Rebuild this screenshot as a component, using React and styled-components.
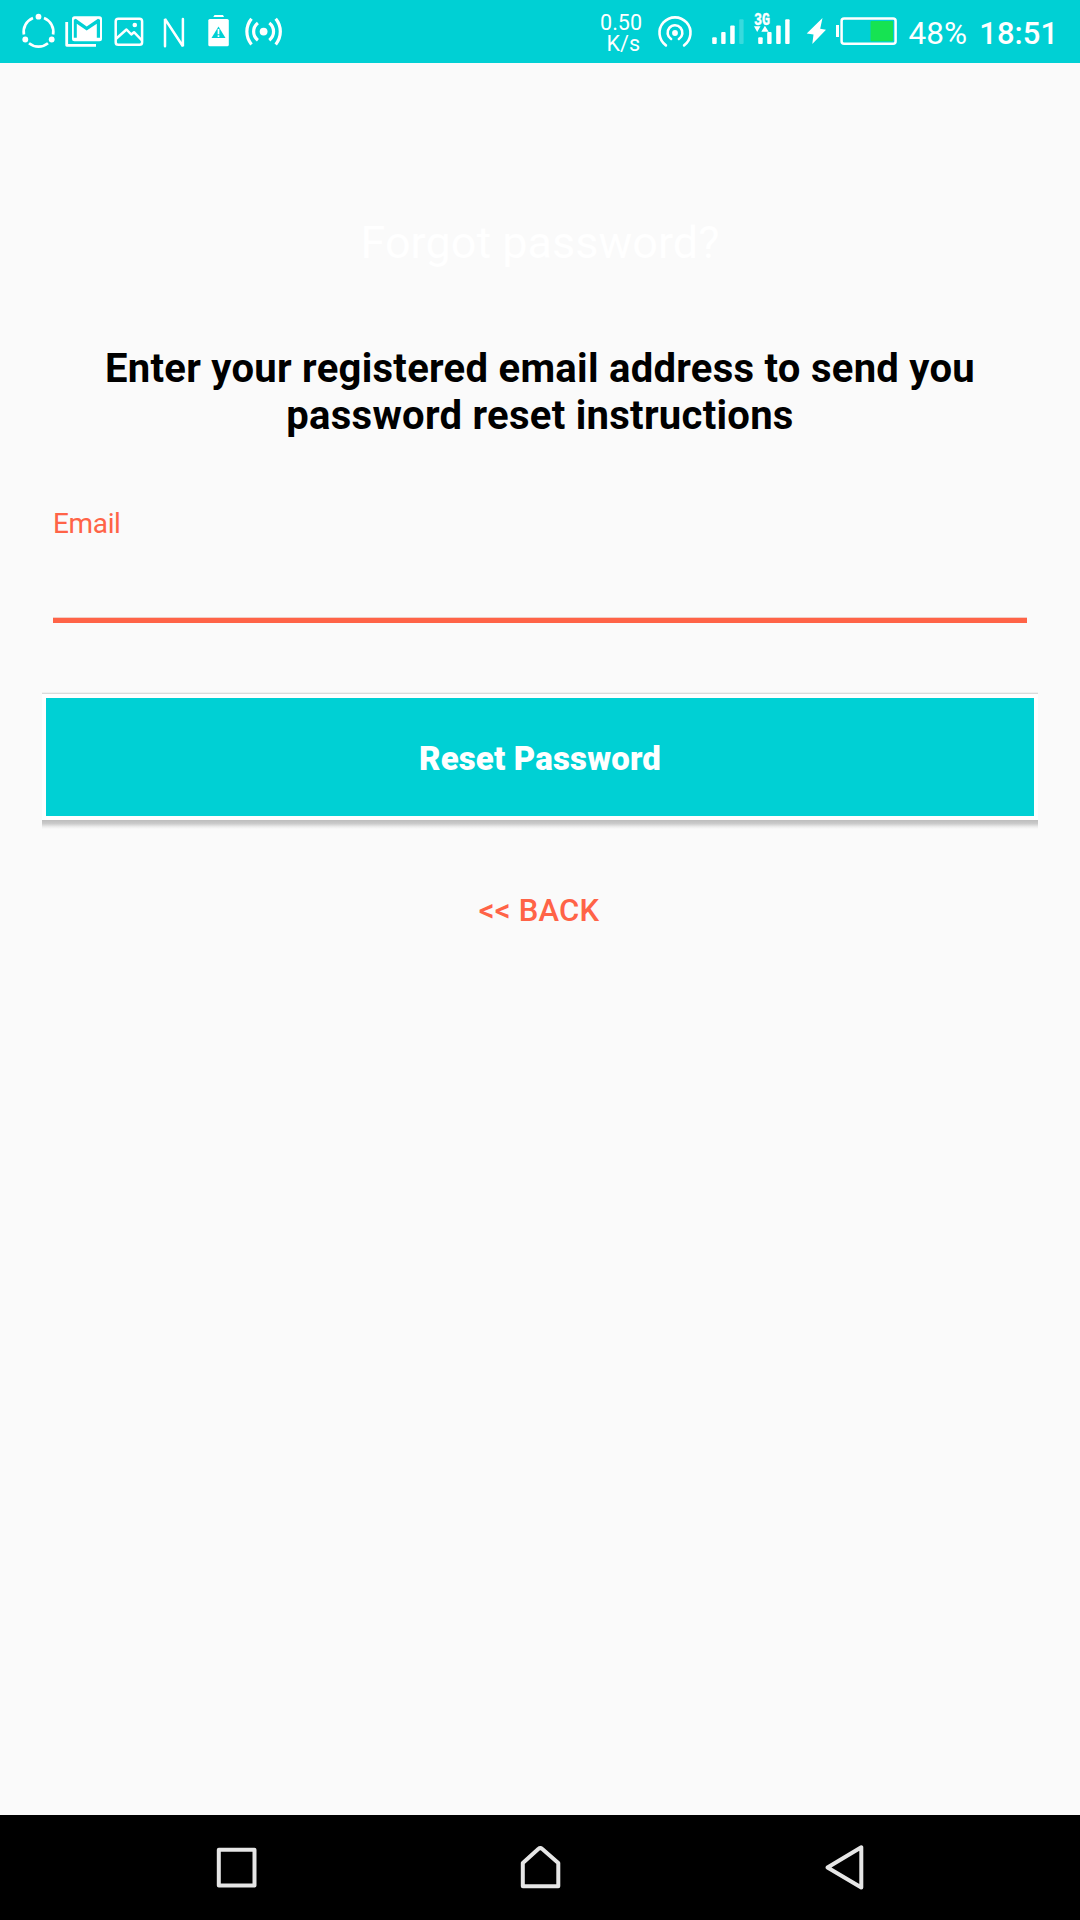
import React from "react";
import styled, { createGlobalStyle } from "styled-components";

const TEAL = "#00d0d4";
const CORAL = "#ff6347";

const Global = createGlobalStyle`
  *, *::before, *::after { box-sizing: border-box; }
  body { margin: 0; background: #fafafa; font-family: Roboto, sans-serif; }
`;

const Screen = styled.div`
  display: flex;
  flex-direction: column;
  width: 1080px;
  height: 1920px;
  overflow: hidden;
  background: #fafafa;
`;

const StatusBar = styled.header`
  display: flex;
  justify-content: space-between;
  flex: none;
  height: 63px;
  padding: 0 22px 0 20px;
  background: ${TEAL};
  color: #fff;
`;

const StatusGroup = styled.div`
  display: flex;
  align-items: flex-start;
`;

const Glyph = styled.svg`
  display: block;
  flex: none;
  height: 63px;
  width: ${(p) => p.$w}px;
`;

const NetSpeed = styled.div`
  width: 46px;
  padding-top: 12px;
  font-size: 21.5px;
  line-height: 21px;
  text-align: right;
  white-space: nowrap;
`;

const Speed = styled.div`
  padding-right: ${(p) => p.$inset || 0}px;
`;

const StatusText = styled.span`
  width: ${(p) => p.$w}px;
  padding-top: 15px;
  font-size: ${(p) => p.$size}px;
  font-weight: ${(p) => p.$weight || 400};
  line-height: 38px;
  white-space: nowrap;
  text-align: right;
`;

const Main = styled.main`
  display: flex;
  flex-direction: column;
  flex: 1;
  padding: 153px 42px 0;
`;

const Title = styled.h1`
  margin: 0;
  font-size: 45px;
  font-weight: 400;
  line-height: 53px;
  text-align: center;
  color: #fff;
`;

const Instructions = styled.p`
  margin: 76px 0 0;
  font-size: 40px;
  font-weight: 700;
  line-height: 47px;
  letter-spacing: 0.28px;
  text-align: center;
  color: #000;
`;

const Field = styled.label`
  display: flex;
  flex-direction: column;
  margin: 68px 11px 0;
`;

const FieldLabel = styled.span`
  height: 33px;
  font-size: 28px;
  line-height: 33px;
  letter-spacing: -0.35px;
  color: ${CORAL};
`;

const Input = styled.input`
  height: 83px;
  margin: 0;
  padding: 30px 0 0;
  border: 0;
  border-bottom: 5px solid ${CORAL};
  outline: 0;
  background: linear-gradient(#f3cdc5, #f3cdc5) bottom / 100% 1px no-repeat;
  font: 32px Roboto, sans-serif;
`;

const Raised = styled.div`
  display: flex;
  flex-direction: column;
  margin-top: 69px;
  &::before {
    content: "";
    height: 2px;
    background: linear-gradient(#f0f0f0 50%, #dadada 50%);
  }
  &::after {
    content: "";
    height: 9px;
    background: linear-gradient(#bdbdbd, #cbcbcb 40%, #ececec 75%, #fafafa);
  }
`;

const ResetButton = styled.button`
  height: 126px;
  padding: 4px 0 0;
  border: 4px solid #fff;
  background: ${TEAL};
  color: #fff;
  font: 900 33px/38px Roboto, sans-serif;
  letter-spacing: 0.15px;
`;

const BackButton = styled.button`
  align-self: center;
  margin: 63px 2px 0 0;
  padding: 0;
  border: 0;
  background: none;
  color: ${CORAL};
  font: 500 31px/37px Roboto, sans-serif;
  letter-spacing: 0.2px;
`;

const NavBar = styled.nav`
  display: flex;
  justify-content: space-between;
  align-items: flex-start;
  flex: none;
  height: 105px;
  padding: 28px 214px 0;
  background: #000;
`;

const NavIcon = styled.svg`
  display: block;
  width: 44px;
  height: 48px;
  fill: none;
  stroke: #e6e6e6;
  stroke-width: 4;
  stroke-linejoin: round;
`;

// Status glyphs share the bar's own coordinate space, one slice each.
function BarGlyph({ x, w, children }) {
  return (
    <Glyph $w={w} viewBox={`${x} 0 ${w} 63`} fill="#fff" aria-hidden="true">
      {children}
    </Glyph>
  );
}

function Notifications() {
  return (
    <StatusGroup>
      <BarGlyph x={20} w={40}>
        <circle cx="38.5" cy="16.7" r="2.9" />
        <circle cx="25.3" cy="39.5" r="2.9" />
        <circle cx="51.7" cy="39.5" r="2.9" />
        <g fill="none" stroke="#fff" strokeWidth="2.7">
          <path d="M33 17.9A15 15 0 0 0 23.9 34.5" />
          <path d="M44 17.9A15 15 0 0 1 53.1 34.5" />
          <path d="M29 43.3A15 15 0 0 0 48 43.3" />
        </g>
      </BarGlyph>
      <BarGlyph x={60} w={50}>
        <path fill="none" stroke="#fff" strokeWidth="2.8" strokeLinejoin="round" d="M66.7 22V45.3H96" />
        <path fillRule="evenodd" d="M74.5 16H99.5Q102 16 102 18.5V38.5Q102 41 99.5 41H74.5Q72 41 72 38.5V18.5Q72 16 74.5 16ZM73.8 19.5V37.5H76.8V23.5L86.7 30.3L96.8 23.5V37.5H100V19.5L98 18.5L86.7 26.2L75.8 18.5Z" transform="translate(0 .2)" />
      </BarGlyph>
      <BarGlyph x={110} w={45}>
        <g fill="none" stroke="#fff" strokeWidth="2.5" strokeLinejoin="round">
          <rect x="115.7" y="18.7" width="26.4" height="26.1" rx="2.6" />
          <path d="M115.8 39L126.5 29.5L131.3 34.5L134 32.2L142 40.5" />
        </g>
        <circle cx="134.8" cy="25" r="2.3" />
      </BarGlyph>
      <BarGlyph x={155} w={45}>
        <path fill="none" stroke="#fff" strokeWidth="2.5" strokeLinecap="round" strokeLinejoin="bevel" d="M165 46.3V19L182.9 46.3V19" />
      </BarGlyph>
      <BarGlyph x={200} w={38}>
        <path d="M214.5 15H223L224 17H213.3Z" />
        <rect x="208.3" y="19" width="20.5" height="27.3" rx="1.6" />
        <path fill={TEAL} d="M218.5 26.5L225.5 38H211.5Z" />
        <path fill="none" stroke="#fff" strokeWidth="1.7" d="M218.5 29V34.2M218.5 35.2V37" />
      </BarGlyph>
      <BarGlyph x={238} w={50}>
        <circle cx="263.6" cy="31.6" r="3.9" />
        <g fill="none" stroke="#fff" strokeWidth="3.2">
          <path d="M257.9 23A10.8 10.8 0 0 0 257.9 40.2M269.3 23A10.8 10.8 0 0 1 269.3 40.2" />
          <path d="M251.5 18.8A20 20 0 0 0 251.5 44.4M275.7 18.8A20 20 0 0 1 275.7 44.4" />
        </g>
      </BarGlyph>
    </StatusGroup>
  );
}

function SystemStatus() {
  return (
    <StatusGroup>
      <NetSpeed>
        <Speed>0.50</Speed>
        <Speed $inset={2}>K/s</Speed>
      </NetSpeed>
      <BarGlyph x={642} w={60}>
        <circle cx="675" cy="33" r="2.9" />
        <g fill="none" stroke="#fff" strokeWidth="2.6" strokeLinecap="round">
          <path d="M671.1 39A7.4 7.4 0 1 1 678.9 39" />
          <path d="M665.9 45.4A15.5 15.5 0 1 1 684.1 45.4" />
        </g>
      </BarGlyph>
      <BarGlyph x={702} w={48}>
        <rect x="712.2" y="37.2" width="4.5" height="6.8" rx="1" />
        <rect x="721.2" y="32" width="4.4" height="12" rx="1" />
        <rect x="730.2" y="25.6" width="4.5" height="18.4" rx="1" />
        <rect x="739.2" y="19.3" width="4.4" height="24.7" rx="1" opacity=".22" />
      </BarGlyph>
      <BarGlyph x={750} w={52}>
        <text x="754" y="25" fontFamily="Liberation Mono, monospace" fontSize="18" fontWeight="700" stroke="#fff" strokeWidth=".4" textLength="16" lengthAdjust="spacingAndGlyphs">3G</text>
        <path d="M754 26.2H760.5L757.2 32ZM761.3 31.8H768.7L764.9 25.8Z" />
        <rect x="758.2" y="37.2" width="4.5" height="6.8" rx="1" />
        <rect x="767.2" y="32" width="4.4" height="12" rx="1" />
        <rect x="776.2" y="25.6" width="4.5" height="18.4" rx="1" />
        <rect x="785.2" y="19.3" width="4.4" height="24.7" rx="1" />
      </BarGlyph>
      <BarGlyph x={802} w={30}>
        <path d="M822.5 18L820.2 28.8L826 29.7L812.3 44L813.5 34.5L806.7 33.4Z" />
      </BarGlyph>
      <BarGlyph x={832} w={70}>
        <rect x="836" y="25" width="3" height="12" />
        <rect x="841.6" y="18.5" width="54" height="25.3" rx="2.5" fill="none" stroke="#fff" strokeWidth="2.5" />
        <rect x="870.5" y="21" width="22.5" height="20.2" rx="1" fill="#16e352" />
      </BarGlyph>
      <StatusText $w={65} $size={31.5}>48%</StatusText>
      <StatusText $w={91} $size={31} $weight={500}>18:51</StatusText>
    </StatusGroup>
  );
}

export default function App() {
  return (
    <Screen>
      <Global />
      <StatusBar>
        <Notifications />
        <SystemStatus />
      </StatusBar>
      <Main>
        <Title>Forgot password?</Title>
        <Instructions>
          Enter your registered email address to send you
          <br />
          password reset instructions
        </Instructions>
        <Field>
          <FieldLabel>Email</FieldLabel>
          <Input type="email" />
        </Field>
        <Raised>
          <ResetButton type="button">Reset Password</ResetButton>
        </Raised>
        <BackButton type="button">&lt;&lt; BACK</BackButton>
      </Main>
      <NavBar>
        <NavIcon viewBox="214 1843 44 48">
          <path d="M218.8 1849.7H254.5V1885.5H218.8Z" />
        </NavIcon>
        <NavIcon viewBox="518 1843 44 48">
          <path d="M522.8 1886.3V1863L538.3 1849Q540.3 1847.3 542.3 1849L558.3 1863V1886.3Z" />
        </NavIcon>
        <NavIcon viewBox="822 1843 44 48">
          <path d="M861.3 1847.3V1887.5L827.5 1867.5Z" />
        </NavIcon>
      </NavBar>
    </Screen>
  );
}
